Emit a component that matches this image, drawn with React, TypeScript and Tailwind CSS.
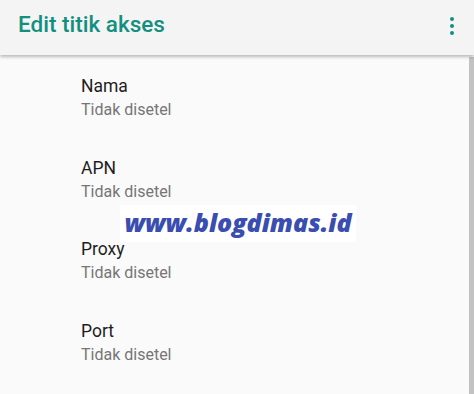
import React from "react";

const items = ["Nama", "APN", "Proxy", "Port"];

export default function App() {
  return (
    <div
      className="relative w-[474px] h-[394px] overflow-hidden bg-[#fafafa]"
      style={{ fontFamily: "Roboto, 'Noto Sans', sans-serif" }}
    >
      <div className="relative z-10 h-[55px] bg-[#f4f4f4] flex items-center justify-between pl-[18px] pr-[20px] shadow-[0_2px_3px_rgba(0,0,0,0.25)]">
        <div className="text-[22.5px] font-medium text-[#138f80] mt-[-5px]">
          Edit titik akses
        </div>
        <div className="flex flex-col gap-[3px] mt-[-4px]">
          <span className="block w-[4px] h-[4px] rounded-full bg-[#138f80]" />
          <span className="block w-[4px] h-[4px] rounded-full bg-[#138f80]" />
          <span className="block w-[4px] h-[4px] rounded-full bg-[#138f80]" />
        </div>
      </div>
      <div className="flex">
        <div className="flex-1 flex flex-col pt-[19px]">
          {items.map((t) => (
            <div key={t} className="h-[81.5px] pl-[81px] flex flex-col">
              <div className="text-[17.5px] leading-[24px] text-[#1e1e1e]">{t}</div>
              <div className="text-[16px] leading-[20px] text-[#767676] mt-[2px]">Tidak disetel</div>
            </div>
          ))}
        </div>
        <div className="w-[5px] h-[339px] bg-[#c2c2c2] mt-[2px]" />
      </div>
      <div className="absolute left-[120px] top-[205px] w-[236px] h-[37px] bg-white flex items-center justify-center">
        <span
          className="text-[25px] font-extrabold italic text-[#3a4db0] leading-none mt-[-2px]"
          style={{ fontFamily: "'Open Sans', sans-serif" }}
        >
          www.blogdimas.id
        </span>
      </div>
    </div>
  );
}
